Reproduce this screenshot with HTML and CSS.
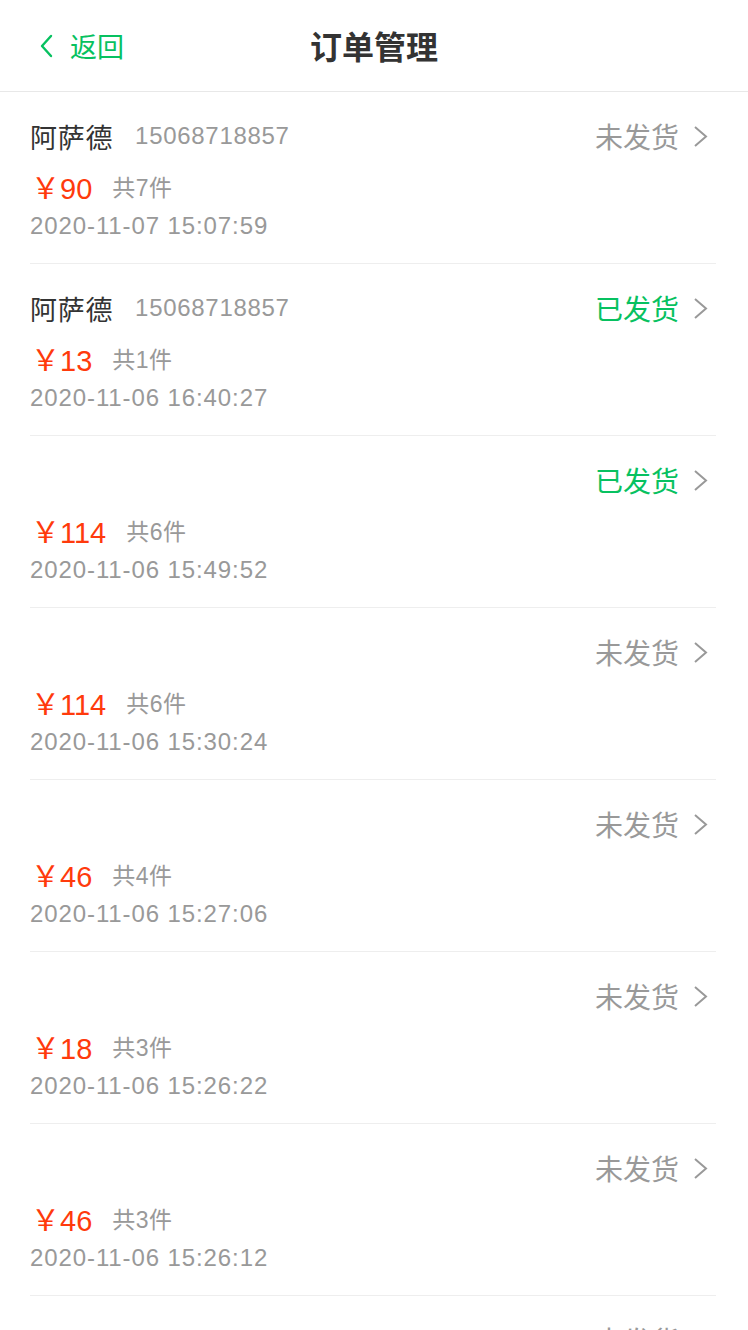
FILE: index.html
```html
<!DOCTYPE html>
<html lang="zh-CN">
<head>
    <meta charset="UTF-8" />
    <meta name="viewport" content="width=device-width, initial-scale=1.0"/>
    <title>订单管理</title>
    <link rel="stylesheet" href="styles.css">
</head>
<body>

<div class="nav">
    <a class="back" href="#">
        <svg class="back-icon" width="14" height="24" viewBox="0 0 14 24"><path d="M12 2 L3 12 L12 22" fill="none" stroke="#07c160" stroke-width="2.4" stroke-linecap="round" stroke-linejoin="round"/></svg>
        <span>返回</span>
    </a>
    <div class="title">订单管理</div>
</div>

<ul class="orders">
    <li class="order">
        <div class="row top">
            <span class="name">阿萨德</span><span class="phone">15068718857</span>
            <span class="status">未发货</span>
            <svg class="arrow" width="16" height="24" viewBox="0 0 16 24"><path d="M2 3 L13 12.5 L2 22" fill="none" stroke="#999" stroke-width="2"/></svg>
        </div>
        <div class="row money"><span class="price">￥90</span><span class="count">共7件</span></div>
        <div class="row time">2020-11-07 15:07:59</div>
    </li>
    <li class="order">
        <div class="row top">
            <span class="name">阿萨德</span><span class="phone">15068718857</span>
            <span class="status sent">已发货</span>
            <svg class="arrow" width="16" height="24" viewBox="0 0 16 24"><path d="M2 3 L13 12.5 L2 22" fill="none" stroke="#999" stroke-width="2"/></svg>
        </div>
        <div class="row money"><span class="price">￥13</span><span class="count">共1件</span></div>
        <div class="row time">2020-11-06 16:40:27</div>
    </li>
    <li class="order">
        <div class="row top">
            <span class="status sent">已发货</span>
            <svg class="arrow" width="16" height="24" viewBox="0 0 16 24"><path d="M2 3 L13 12.5 L2 22" fill="none" stroke="#999" stroke-width="2"/></svg>
        </div>
        <div class="row money"><span class="price">￥114</span><span class="count">共6件</span></div>
        <div class="row time">2020-11-06 15:49:52</div>
    </li>
    <li class="order">
        <div class="row top">
            <span class="status">未发货</span>
            <svg class="arrow" width="16" height="24" viewBox="0 0 16 24"><path d="M2 3 L13 12.5 L2 22" fill="none" stroke="#999" stroke-width="2"/></svg>
        </div>
        <div class="row money"><span class="price">￥114</span><span class="count">共6件</span></div>
        <div class="row time">2020-11-06 15:30:24</div>
    </li>
    <li class="order">
        <div class="row top">
            <span class="status">未发货</span>
            <svg class="arrow" width="16" height="24" viewBox="0 0 16 24"><path d="M2 3 L13 12.5 L2 22" fill="none" stroke="#999" stroke-width="2"/></svg>
        </div>
        <div class="row money"><span class="price">￥46</span><span class="count">共4件</span></div>
        <div class="row time">2020-11-06 15:27:06</div>
    </li>
    <li class="order">
        <div class="row top">
            <span class="status">未发货</span>
            <svg class="arrow" width="16" height="24" viewBox="0 0 16 24"><path d="M2 3 L13 12.5 L2 22" fill="none" stroke="#999" stroke-width="2"/></svg>
        </div>
        <div class="row money"><span class="price">￥18</span><span class="count">共3件</span></div>
        <div class="row time">2020-11-06 15:26:22</div>
    </li>
    <li class="order">
        <div class="row top">
            <span class="status">未发货</span>
            <svg class="arrow" width="16" height="24" viewBox="0 0 16 24"><path d="M2 3 L13 12.5 L2 22" fill="none" stroke="#999" stroke-width="2"/></svg>
        </div>
        <div class="row money"><span class="price">￥46</span><span class="count">共3件</span></div>
        <div class="row time">2020-11-06 15:26:12</div>
    </li>
    <li class="order">
        <div class="row top">
            <span class="status">未发货</span>
            <svg class="arrow" width="16" height="24" viewBox="0 0 16 24"><path d="M2 3 L13 12.5 L2 22" fill="none" stroke="#999" stroke-width="2"/></svg>
        </div>
        <div class="row money"><span class="price">￥46</span><span class="count">共3件</span></div>
        <div class="row time">2020-11-06 15:20:01</div>
    </li>
</ul>

</body>
</html>
```

FILE: styles.css
```css
* { box-sizing: border-box; }
body {
    margin: 0;
    background: #fff;
    font-family: "Liberation Sans", "Noto Sans CJK SC", sans-serif;
    color: #333;
    overflow: hidden;
}
.nav {
    position: relative;
    height: 92px;
    border-bottom: 1px solid #e8e8e8;
    display: flex;
    align-items: center;
    justify-content: center;
    padding-bottom: 2px;
}
.back {
    position: absolute;
    left: 39px;
    top: 0;
    height: 91px;
    display: flex;
    align-items: center;
    gap: 17px;
    color: #07c160;
    font-size: 27px;
    text-decoration: none;
}
.title {
    font-size: 32px;
    font-weight: bold;
    color: #333;
}
.orders {
    list-style: none;
    margin: 0;
    padding: 0;
}
.order {
    margin: 0 32px 0 30px;
    height: 172px;
    padding-top: 20px;
    border-bottom: 1px solid #eee;
}
.row { display: flex; align-items: center; }
.top { height: 48px; }
.name { font-size: 27px; color: #333; letter-spacing: 0.7px; }
.phone { font-size: 24px; color: #999; margin-left: 22px; letter-spacing: 0.7px; }
.status { margin-left: auto; font-size: 28px; color: #999; }
.status.sent { color: #07c160; }
.arrow { margin-left: 14px; margin-right: 7px; }
.money { height: 40px; margin-top: 6px; }
.price { font-size: 29px; color: #ff3a0c; margin-left: 1px; }
.count { font-size: 23px; color: #999; margin-left: 20px; letter-spacing: 0.5px; }
.time { height: 34px; margin-top: 3px; font-size: 24px; color: #999; letter-spacing: 0.9px; }
```
